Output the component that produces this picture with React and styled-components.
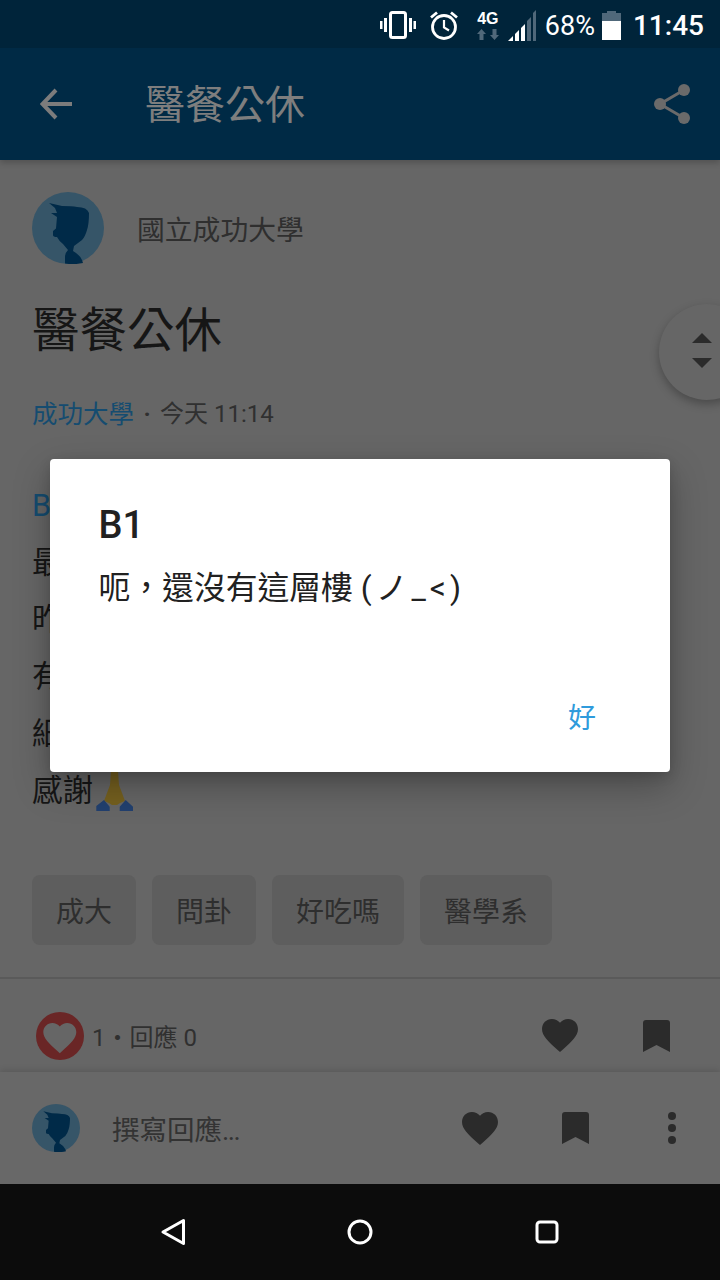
import styled, { createGlobalStyle } from "styled-components";

const Global = createGlobalStyle`
  html, body { margin: 0; padding: 0; background: #666; }
  * { box-sizing: border-box; }
  body { font-family: Roboto, "Noto Sans CJK TC", sans-serif; }
`;

const Page = styled.div`
  width: 720px;
  height: 1280px;
  display: flex;
  flex-direction: column;
  overflow: hidden;
`;

const StatusBar = styled.div`
  height: 48px;
  flex: none;
  background: #00243a;
  color: #fff;
  display: flex;
  align-items: center;
  justify-content: flex-end;
  padding: 2px 16px 0 0;
`;

const StatusText = styled.span`
  font-size: ${(p) => p.$size}px;
  font-weight: ${(p) => p.$weight || 400};
  margin-left: ${(p) => p.$left || 0}px;
  line-height: 48px;
  padding-top: 2px;
`;

const StatusIcon = styled.svg`
  display: block;
  flex: none;
  margin-left: ${(p) => p.$left || 0}px;
`;

const NetBadge = styled.div`
  width: 22px;
  height: 28px;
  margin: 1px 0 0 19px;
  display: flex;
  flex-direction: column;
  align-items: center;
  justify-content: space-between;
`;

const NetLabel = styled.span`
  font-family: "Liberation Sans", sans-serif;
  font-size: 16px;
  font-weight: 700;
  line-height: 14px;
`;

const Screen = styled.div`
  flex: 1;
  min-height: 0;
  position: relative;
  display: flex;
  flex-direction: column;
  background: #666;
  overflow: hidden;
`;

const Header = styled.header`
  height: 112px;
  flex: none;
  background: #002a45;
  display: flex;
  align-items: center;
  padding: 0 29px 0 40px;
  box-shadow: 0 3px 6px rgba(0, 0, 0, 0.2);
  position: relative;
`;

const HeaderTitle = styled.h1`
  flex: 1;
  margin: 3px 0 0 73px;
  font-size: 40px;
  font-weight: 400;
  line-height: 56px;
  color: #7e7e7e;
`;

const Content = styled.main`
  flex: 1;
  min-height: 0;
`;

const Article = styled.div`
  padding: 32px 32px 32px;
  border-bottom: 2px solid #5a5a5a;
`;

const AuthorRow = styled.div`
  display: flex;
  align-items: center;
  gap: 33px;
  font-size: 27.8px;
  color: #2f2f2f;
`;

const AvatarSvg = styled.svg`
  display: block;
  flex: none;
  width: ${(p) => p.$size}px;
  height: ${(p) => p.$size}px;
`;

const PostTitle = styled.h2`
  margin: 35px 0 0;
  font-size: 47.5px;
  line-height: 64px;
  font-weight: 400;
  color: #161616;
`;

const Meta = styled.div`
  margin-top: 33px;
  font-size: 24px;
  line-height: 36px;
  color: #303030;
  display: flex;
  align-items: center;
`;

const School = styled.span`
  color: #154c70;
  font-size: 25.5px;
`;

const Dot = styled.span`
  width: 26px;
  text-align: center;
  font-weight: 700;
`;

const Body = styled.div`
  margin-top: 45px;
  font-size: 30.5px;
  line-height: 57px;
`;

const BodyLine = styled.div`
  display: flex;
  align-items: center;
  gap: 3px;
  height: 57px;
  color: ${(p) => (p.$floor ? "#154c70" : "#161616")};
`;

const Tags = styled.div`
  display: flex;
  gap: 16px;
  margin-top: 56px;
`;

const Tag = styled.span`
  height: 70px;
  padding: 0 24px;
  border-radius: 8px;
  background: #5e5e5e;
  color: #2e2e2e;
  font-size: 28px;
  display: flex;
  align-items: center;
`;

const Stats = styled.div`
  height: 93px;
  padding: 20px 50px 0 36px;
  display: flex;
  align-items: center;
`;

const StatsText = styled.span`
  flex: 1;
  margin-left: 8px;
  font-size: 24px;
  color: #303030;
`;

const ActionIcon = styled.svg`
  display: block;
  flex: none;
  fill: #2b2b2b;
  margin-left: ${(p) => p.$left || 0}px;
`;

const ReplyBar = styled.div`
  height: 112px;
  flex: none;
  padding: 0 44px 0 32px;
  display: flex;
  align-items: center;
  background: #686868;
  box-shadow: 0 -2px 6px rgba(0, 0, 0, 0.12);
  position: relative;
`;

const ReplyHint = styled.span`
  flex: 1;
  margin-left: 32px;
  font-size: 27.5px;
  color: #333;
`;

const Ellipsis = styled.span`
  letter-spacing: -1.5px;
`;

const ScrollButton = styled.div`
  position: absolute;
  left: 659px;
  top: 256px;
  width: 96px;
  height: 96px;
  border-radius: 50%;
  background: #666;
  box-shadow: 0 4px 10px rgba(0, 0, 0, 0.28);
  padding: 0 0 4px 33px;
  display: flex;
  flex-direction: column;
  justify-content: center;
  gap: 15px;
`;

const Arrow = styled.span`
  width: 0;
  height: 0;
  border-left: 10px solid transparent;
  border-right: 10px solid transparent;
  ${(p) => (p.$down ? "border-top" : "border-bottom")}: 10px solid #2b2b2b;
`;

const Overlay = styled.div`
  position: absolute;
  inset: 0;
  display: flex;
  align-items: center;
  justify-content: center;
`;

const Dialog = styled.div`
  width: 620px;
  height: 313px;
  margin-bottom: 1px;
  background: #fff;
  border-radius: 4px;
  padding: 44px 48px 0 48.5px;
  box-shadow: 0 14px 36px rgba(0, 0, 0, 0.28), 0 4px 12px rgba(0, 0, 0, 0.14);
  display: flex;
  flex-direction: column;
`;

const DialogTitle = styled.div`
  font-size: 38px;
  font-weight: 500;
  line-height: 44px;
  color: #212121;
`;

const DialogText = styled.div`
  margin-top: 19px;
  font-size: 31.8px;
  line-height: 44px;
  color: #212121;
`;

const Kaomoji = styled.span`
  letter-spacing: 4px;
`;

const DialogActions = styled.div`
  margin-top: auto;
  height: 112px;
  padding-right: 26px;
  display: flex;
  align-items: center;
  justify-content: flex-end;
`;

const DialogButton = styled.span`
  font-size: 28px;
  color: #2f9bdc;
`;

const NavBar = styled.nav`
  height: 96px;
  flex: none;
  background: #0c0c0c;
  display: flex;
  align-items: center;
  justify-content: center;
  gap: 159px;
`;

const NavIcon = styled.svg`
  display: block;
  width: 28px;
  height: 28px;
  fill: none;
  stroke: #fff;
  stroke-width: 3;
  stroke-linejoin: round;
`;

const HEART = "M12 21.35l-1.45-1.32C5.4 15.36 2 12.28 2 8.5 2 5.42 4.42 3 7.5 3c1.74 0 3.41.81 4.5 2.09C13.09 3.81 14.76 3 16.5 3 19.58 3 22 5.42 22 8.5c0 3.78-3.4 6.86-8.55 11.54L12 21.35z";
const BOOKMARK = "M3 0h21a3 3 0 0 1 3 3v29l-13.5-7L0 32V3a3 3 0 0 1 3-3z";

const Avatar = ({ size }) => (
  <AvatarSvg $size={size} viewBox="0 0 72 72">
    <circle cx="36" cy="36" r="36" fill="#365568" />
    <path
      fill="#002a48"
      d="M17 11L30 14Q40 14 45 15Q55 15 57 21Q57 32 55 38Q53 45 50 48L42 54L41 59Q48 63 50 68L51 71Q42 73 33 71.500L33 65Q33 61 36 58L31 52Q27 49 25 45Q21 45 21 43L21 39L24 36.500L25 25L19 21L25 21L23 16Z"
    />
  </AvatarSvg>
);

const Heart = () => (
  <ActionIcon width="36" height="33" viewBox="2 3 20 18.35">
    <path d={HEART} />
  </ActionIcon>
);

const Bookmark = ({ left }) => (
  <ActionIcon $left={left} width="27" height="32" viewBox="0 0 27 32">
    <path d={BOOKMARK} />
  </ActionIcon>
);

export default function App() {
  return (
    <Page>
      <Global />
      <StatusBar>
        <StatusIcon width="36" height="28" viewBox="0 0 36 28" fill="#fff">
          <rect x="10.500" y="1.500" width="15" height="25" rx="2" fill="none" stroke="#fff" strokeWidth="3" />
          <rect x="4" y="7" width="3" height="14" />
          <rect x="0" y="10" width="2.500" height="8" />
          <rect x="29" y="7" width="3" height="14" />
          <rect x="33.500" y="10" width="2.500" height="8" />
        </StatusIcon>
        <StatusIcon $left={14} width="28" height="29" viewBox="0 0 28 29" fill="none" stroke="#fff">
          <circle cx="14" cy="16" r="11.500" strokeWidth="2.800" />
          <path d="M14 9v7.500l5 3" strokeWidth="2.200" />
          <path d="M1 6.500L7 1.500M27 6.500L21 1.500" strokeWidth="2.800" />
        </StatusIcon>
        <NetBadge>
          <NetLabel>4G</NetLabel>
          <StatusIcon width="22" height="11" viewBox="0 0 22 11" fill="#50687a">
            <path d="M4.500 0L9 5H6.500v6h-4V5H0z" />
            <path d="M17.500 11L13 6h2.500V0h4v6H22z" />
          </StatusIcon>
        </NetBadge>
        <StatusIcon $left={9} width="28" height="31" viewBox="0 0 28 31">
          <path fill="#fff" d="M0 31L5 26V31Z" />
          <path fill="#fff" d="M7 24L11 20V31H7Z" />
          <path fill="#fff" d="M13 18L17 14V31H13Z" />
          <path fill="#50687a" d="M19 11L23 7V31H19Z" />
          <path fill="#50687a" d="M25 3L28 0V31H25Z" />
        </StatusIcon>
        <StatusText $size={27} $left={9}>68%</StatusText>
        <StatusIcon $left={7} width="19" height="29" viewBox="0 0 19 29">
          <path fill="#50687a" d="M5 0h9v2h5v10H0V2h5z" />
          <rect fill="#fff" x="0" y="10" width="19" height="19" />
        </StatusIcon>
        <StatusText $size={28} $weight={500} $left={12}>11:45</StatusText>
      </StatusBar>

      <Screen>
        <Header>
          <svg width="32" height="32" viewBox="0 0 32 32" fill="none" stroke="#7c7c7c" strokeWidth="4">
            <path d="M32 16H3M16 2L2.500 16L16 30" />
          </svg>
          <HeaderTitle>醫餐公休</HeaderTitle>
          <svg width="38" height="42" viewBox="0 0 38 42" fill="#6a6a6a" stroke="#6a6a6a">
            <path d="M31 7L7 21L31 35" fill="none" strokeWidth="3" />
            <circle cx="31" cy="7" r="6" strokeWidth="0" />
            <circle cx="7" cy="21" r="6" strokeWidth="0" />
            <circle cx="31" cy="35" r="6" strokeWidth="0" />
          </svg>
        </Header>

        <Content>
          <Article>
            <AuthorRow>
              <Avatar size={72} />
              國立成功大學
            </AuthorRow>
            <PostTitle>醫餐公休</PostTitle>
            <Meta>
              <School>成功大學</School>
              <Dot>·</Dot>
              今天 11:14
            </Meta>
            <Body>
              <BodyLine $floor>B</BodyLine>
              <BodyLine>最</BodyLine>
              <BodyLine>昨</BodyLine>
              <BodyLine>有</BodyLine>
              <BodyLine>細</BodyLine>
              <BodyLine>
                感謝
                <svg width="38" height="40" viewBox="0 0 38 40">
                  <path fill="#75601f" d="M15 0H22L23 14L29 30L24 32L21 34H16L13 32L8 30L14 14Z" />
                  <path fill="#22406f" d="M0.300 35L8 29L13.700 35.700V40H0.300ZM23.700 35.700L29.700 29L37 35.700V40H23.700Z" />
                </svg>
              </BodyLine>
            </Body>
            <Tags>
              <Tag>成大</Tag>
              <Tag>問卦</Tag>
              <Tag>好吃嗎</Tag>
              <Tag>醫學系</Tag>
            </Tags>
          </Article>
          <Stats>
            <svg width="48" height="48" viewBox="0 0 48 48">
              <circle cx="24" cy="24" r="24" fill="#6a2626" />
              <path fill="#666" transform="translate(4 6) scale(1.650)" d={HEART} />
            </svg>
            <StatsText>1・回應 0</StatsText>
            <Heart />
            <Bookmark left={65} />
          </Stats>
        </Content>

        <ReplyBar>
          <Avatar size={48} />
          <ReplyHint>
            撰寫回應<Ellipsis>...</Ellipsis>
          </ReplyHint>
          <Heart />
          <Bookmark left={64} />
          <ActionIcon $left={79} width="8" height="32" viewBox="0 0 8 32">
            <circle cx="4" cy="4" r="4" />
            <circle cx="4" cy="16" r="4" />
            <circle cx="4" cy="28" r="4" />
          </ActionIcon>
        </ReplyBar>

        <ScrollButton>
          <Arrow />
          <Arrow $down />
        </ScrollButton>

        <Overlay>
          <Dialog>
            <DialogTitle>B1</DialogTitle>
            <DialogText>
              呃，還沒有這層樓 <Kaomoji>(ノ_&lt;)</Kaomoji>
            </DialogText>
            <DialogActions>
              <DialogButton>好</DialogButton>
            </DialogActions>
          </Dialog>
        </Overlay>
      </Screen>

      <NavBar>
        <NavIcon viewBox="0 0 28 28">
          <path d="M24.500 2.500V25.500L4 14Z" />
        </NavIcon>
        <NavIcon viewBox="0 0 28 28">
          <circle cx="14" cy="14" r="11" />
        </NavIcon>
        <NavIcon viewBox="0 0 28 28">
          <rect x="4" y="4" width="20" height="20" rx="3" />
        </NavIcon>
      </NavBar>
    </Page>
  );
}
